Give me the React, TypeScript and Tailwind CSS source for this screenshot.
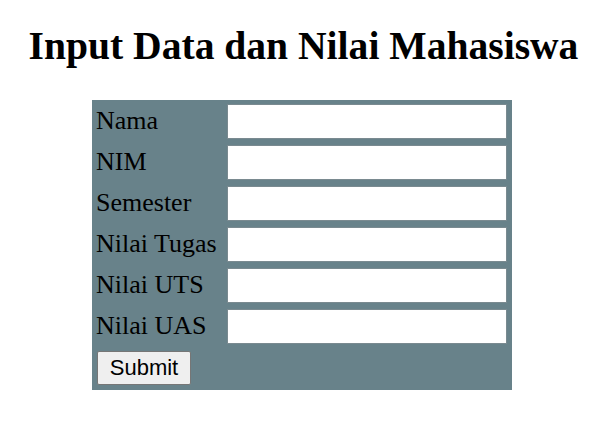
import React from "react";

const labels = ["Nama", "NIM", "Semester", "Nilai Tugas", "Nilai UTS", "Nilai UAS"];

export default function App() {
  return (
    <div className="w-[606px] h-[426px] bg-white" style={{ fontFamily: '"Liberation Serif", "Times New Roman", serif' }}>
      <h1 className="text-center text-[39.6px] font-bold leading-none pt-[27px] pl-[1px] text-black" style={{ fontFamily: '"Liberation Serif", "Times New Roman", serif' }}>
        Input Data dan Nilai Mahasiswa
      </h1>
      <div className="ml-[92px] mt-[33px] w-[420px] bg-[#68828a] pt-[4px] pl-[4px] pr-[5px] pb-[5px]">
        <div className="grid grid-cols-[131px_280px] gap-y-[6px]">
          {labels.map((l) => (
            <React.Fragment key={l}>
              <div className="h-[35px] flex items-center text-[26px] leading-none text-black">{l}</div>
              <input className="h-[35px] w-[280px] bg-white border border-[#7a8a90] outline-none" />
            </React.Fragment>
          ))}
          <div className="pl-[1px] mt-[1px]">
            <button
              className="h-[34px] w-[94px] bg-[#efefef] border border-[#767676] rounded-[2px] text-[22px] text-black leading-none"
              style={{ fontFamily: '"Liberation Sans", Arial, sans-serif' }}
            >
              Submit
            </button>
          </div>
        </div>
      </div>
    </div>
  );
}
